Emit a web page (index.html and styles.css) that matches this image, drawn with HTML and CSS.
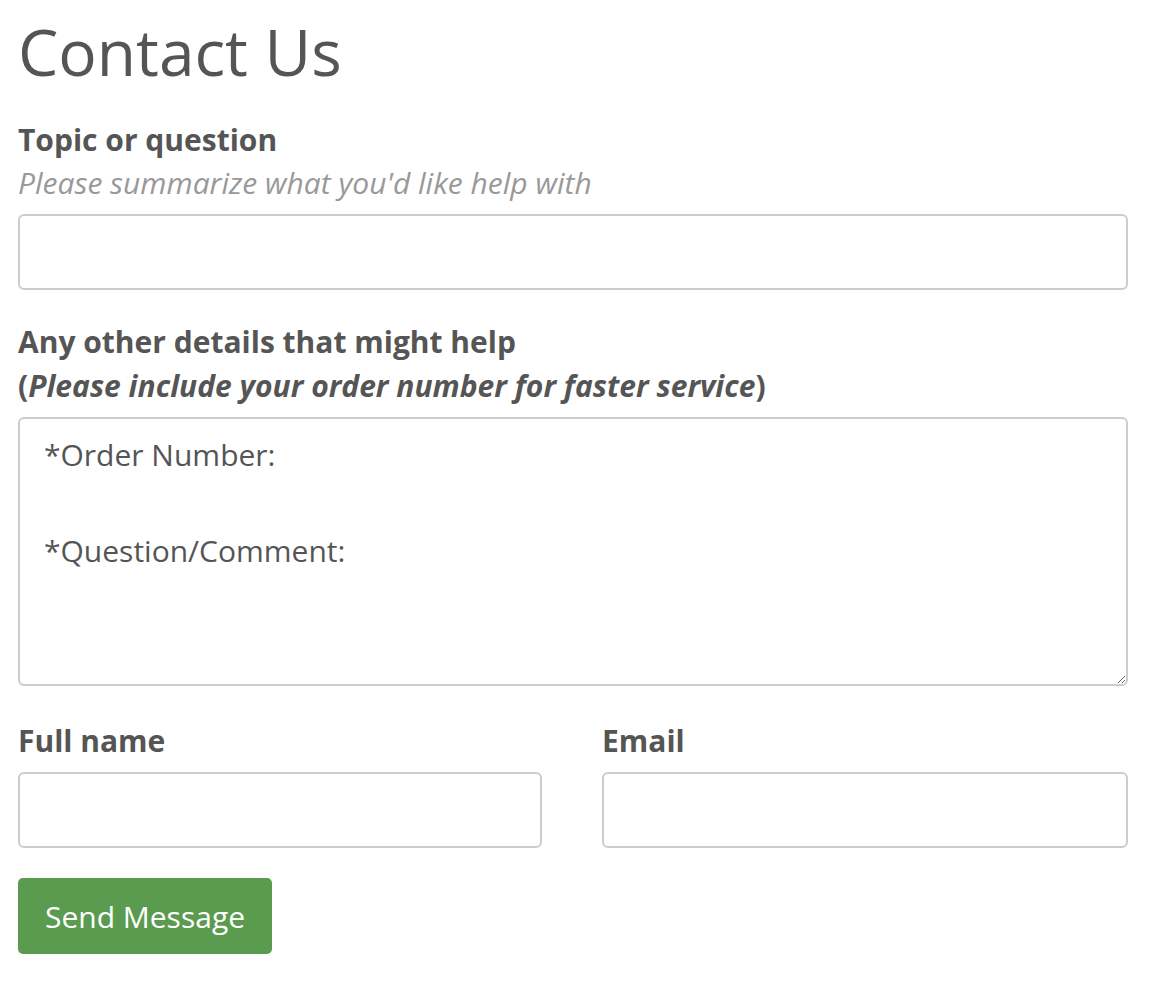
FILE: index.html
```html
<!DOCTYPE html>
<html lang="en">
<head>
    <meta charset="UTF-8">
    <meta name="viewport" content="width=device-width, initial-scale=1.0">
    <title>Contact Us</title>
    <link rel="stylesheet" href="styles.css">
</head>
<body>
    <form class="contact-form">
        <h1 class="page-title">Contact Us</h1>

        <div class="field">
            <label class="field-label" for="topic">Topic or question</label>
            <div class="field-hint">Please summarize what you'd like help with</div>
            <input type="text" id="topic" class="field-input">
        </div>

        <div class="field">
            <label class="field-label" for="details">Any other details that might help<br>(<em>Please include your order number for faster service</em>)</label>
            <textarea id="details" class="field-textarea">*Order Number:

*Question/Comment:</textarea>
        </div>

        <div class="field-row">
            <div class="field">
                <label class="field-label" for="name">Full name</label>
                <input type="text" id="name" class="field-input">
            </div>
            <div class="field">
                <label class="field-label" for="email">Email</label>
                <input type="email" id="email" class="field-input">
            </div>
        </div>

        <button type="submit" class="send-btn">Send Message</button>
    </form>
</body>
</html>
```

FILE: styles.css
```css
body {
    margin: 0;
    font-family: "Open Sans", "Noto Sans", sans-serif;
    color: #555;
    background: #fff;
}
.contact-form {
    width: 1110px;
    padding: 16px 0 0 18px;
    display: flex;
    flex-direction: column;
}
.page-title {
    margin: 0;
    font-size: 64px;
    font-weight: 400;
    line-height: 72px;
}
.field {
    display: flex;
    flex-direction: column;
    margin-top: 30px;
}
.field-label {
    font-size: 30px;
    font-weight: 700;
    line-height: 44px;
    margin-bottom: 9px;
}
.field-label em {
    font-style: italic;
}
.field-hint {
    font-size: 30px;
    font-style: italic;
    line-height: 43px;
    color: #999;
    margin-top: -10px;
    margin-bottom: 10px;
}
.field-input,
.field-textarea {
    box-sizing: border-box;
    width: 100%;
    border: 2px solid #ccc;
    border-radius: 6px;
    background: #fff;
    font-family: inherit;
    font-size: 30px;
    color: #555;
    outline: none;
}
.field-input {
    height: 76px;
    padding: 0 24px;
}
.field-textarea {
    height: 269px;
    padding: 12px 24px;
    line-height: 48px;
    resize: vertical;
}
.field-row {
    display: grid;
    grid-template-columns: 524px 526px;
    column-gap: 60px;
    margin-top: 3px;
}
.send-btn {
    align-self: flex-start;
    margin-top: 30px;
    width: 254px;
    height: 76px;
    border: none;
    border-radius: 5px;
    background: #5a9b4f;
    color: #fff;
    font-family: inherit;
    font-size: 30px;
    cursor: pointer;
}
```
